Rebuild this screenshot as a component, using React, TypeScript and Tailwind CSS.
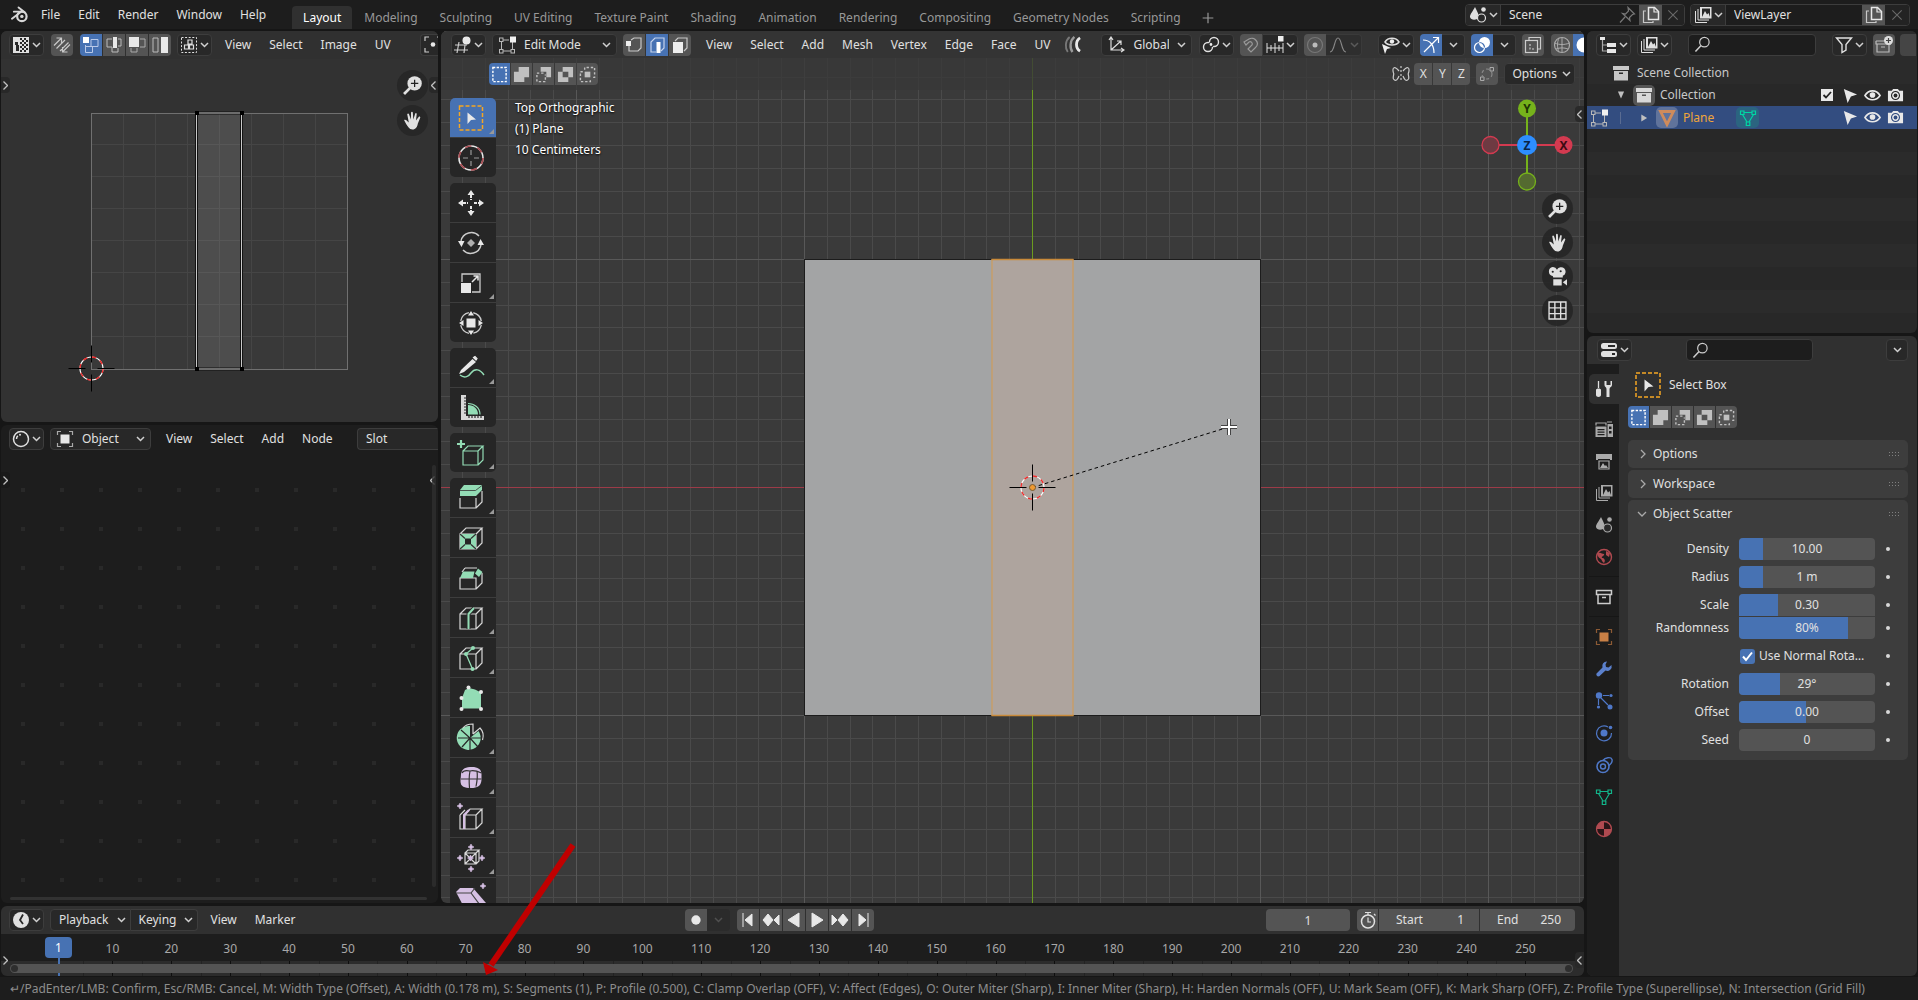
import type { ReactNode } from 'react';

/* ---------- shared pieces ---------- */

type G = { children?: ReactNode; className?: string };

function Ico({ children, className = 'size-[18px]' }: G) {
  return (
    <svg viewBox="0 0 18 18" className={`shrink-0 ${className}`} fill="none" stroke="#e0e0e0" strokeWidth="1.2" aria-hidden="true">
      {children}
    </svg>
  );
}

function Chevron({ className = 'text-[#d0d0d0]' }: G) {
  return (
    <svg viewBox="0 0 9 6" className={`h-[6px] w-[9px] shrink-0 ${className}`} fill="none" stroke="currentColor" strokeWidth="1.5" aria-hidden="true">
      <path d="M1 1l3.500 3.500L8 1" />
    </svg>
  );
}

function Side({ label, dir, className }: { label: string; dir: 'left' | 'right'; className: string }) {
  return (
    <button aria-label={label} className={`flex h-4 w-[9px] shrink-0 items-center justify-center ${className}`}>
      <svg viewBox="0 0 5 9" className="h-[9px] w-[5px]" fill="none" stroke="#c0c0c0" strokeWidth="1.300" aria-hidden="true">
        <path d={dir === 'left' ? 'M4.500 0.500l-4 4 4 4' : 'M0.500 0.500l4 4-4 4'} />
      </svg>
    </button>
  );
}

function IconMenu({ label, children, className = 'w-[35px]' }: G & { label: string }) {
  return (
    <button aria-label={label} className={`flex h-[22px] shrink-0 items-center justify-center gap-[2px] rounded-[4px] border border-[#3d3d3d] bg-[#282828] ${className}`}>
      {children}
      <Chevron />
    </button>
  );
}

function Menus({ items }: { items: string[] }) {
  return (
    <nav className="flex shrink-0">
      {items.map((t) => (
        <button key={t} className="px-[9px] leading-[22px]">
          {t}
        </button>
      ))}
    </nav>
  );
}

function Pick({ label, options, icon, className }: { label: string; options: string[]; icon: ReactNode; className: string }) {
  return (
    <label className={`relative flex h-[22px] shrink-0 items-center gap-2 rounded-[4px] border border-[#3d3d3d] bg-[#282828] px-[5px] ${className}`}>
      {icon}
      <select aria-label={label} className="min-w-0 flex-1 appearance-none bg-transparent leading-5 outline-none">
        {options.map((o) => (
          <option key={o}>{o}</option>
        ))}
      </select>
      <Chevron />
    </label>
  );
}

function Tog({ label, on, children, className = 'w-[22px]' }: G & { label: string; on?: boolean }) {
  return (
    <button aria-label={label} aria-pressed={!!on} className={`flex h-[22px] shrink-0 items-center justify-center ${on ? 'bg-[#4772b3]' : 'bg-[#545454]'} ${className}`}>
      {children}
    </button>
  );
}

function Arm({ label }: { label: string }) {
  return (
    <button aria-label={label} className="flex h-[22px] w-[23px] shrink-0 items-center justify-center rounded-r-[4px] border border-l-0 border-[#3d3d3d] bg-[#282828]">
      <Chevron />
    </button>
  );
}

function SelectOps() {
  return (
    <div className="flex shrink-0 gap-px overflow-hidden rounded-[4px]">
      <Tog label="Set selection" on className="w-[21px]">
        <Ico className="size-[17px]"><rect x="2" y="1.500" width="14" height="15" stroke="#fff" strokeWidth="1.500" strokeDasharray="2.500 1.500" /></Ico>
      </Tog>
      <Tog label="Extend selection" className="w-[21px]">
        <Ico className="size-[17px]"><path d="M6 1h11v11h-5v5H1V6h5z" fill="#c0c0c0" stroke="none" /></Ico>
      </Tog>
      <Tog label="Subtract selection" className="w-[21px]">
        <Ico className="size-[17px]"><path d="M6 1h11v11h-5V6H6z" fill="#c0c0c0" stroke="none" /><path d="M9 7.500H2v9h9V9" stroke="#c0c0c0" strokeWidth="1.500" strokeDasharray="2.500 2" /></Ico>
      </Tog>
      <Tog label="Invert selection" className="w-[21px]">
        <Ico className="size-[17px]"><path d="M6 1h11v11h-5v5H1V6h5zM6 6v6h6V6z" fill="#c0c0c0" fillRule="evenodd" stroke="none" /></Ico>
      </Tog>
      <Tog label="Intersect selection" className="w-[21px]">
        <Ico className="size-[17px]"><rect x="6" y="6" width="6" height="6" fill="#c0c0c0" stroke="none" /><path d="M6 4V1.500h10.500V12H14M4 6H1.500v10.500H12V14" stroke="#c0c0c0" strokeWidth="1.500" strokeDasharray="2.500 2" /></Ico>
      </Tog>
    </div>
  );
}

function Search({ label, className }: { label: string; className: string }) {
  return (
    <label className={`flex h-[22px] shrink-0 items-center rounded-[4px] border border-[#3d3d3d] bg-[#1d1d1d] px-[5px] ${className}`}>
      <Ico className="size-[17px]"><circle cx="11" cy="6.500" r="5" stroke="#ccc" strokeWidth="1.300" /><path d="M7.500 10L1.500 16.500" stroke="#ccc" strokeWidth="1.600" /></Ico>
      <input type="search" aria-label={label} className="w-full min-w-0 bg-transparent outline-none" />
    </label>
  );
}

/* ---------- glyphs ---------- */

const editBox = (
  <Ico>
    <path d="M3.500 6v8M5 15h8M14.500 14V6M5 4h6" stroke="#b8b8b8" strokeWidth="1" />
    <rect x="1.500" y="2" width="3.500" height="3.500" stroke="#b8b8b8" strokeWidth="1" />
    <rect x="1.500" y="13.500" width="3.500" height="3.500" stroke="#b8b8b8" strokeWidth="1" />
    <rect x="13" y="13.500" width="3.500" height="3.500" stroke="#b8b8b8" strokeWidth="1" />
    <rect x="12" y="0.500" width="6" height="6" fill="#f0f0f0" stroke="none" />
  </Ico>
);
const sceneG = (c: string) => (
  <Ico>
    <path d="M6 1c2 4 4 8 4 10-1 3-8 4-9 0 0-3 3-6 5-10z" fill={c} stroke="none" />
    <circle cx="12.500" cy="12" r="4" stroke={c} fill="#282828" />
    <circle cx="14.500" cy="3.500" r="2.300" fill={c} stroke="none" />
  </Ico>
);
const layersG = (c: string) => (
  <Ico>
    <path d="M1.500 5v11.500H13M4 3v11h11" stroke={c} strokeWidth="1" />
    <path d="M6 1h11.500v11.500H6zM8 11h8V2.500H8z" fill={c} fillRule="evenodd" stroke="none" />
    <path d="M8 11l3-6 2 3.500 1.500-1.500L16 11z" fill={c} stroke="none" />
  </Ico>
);
const pagesG = (
  <Ico>
    <path d="M6.500 1.500h6l4 4v8h-10z" stroke="#e8e8e8" strokeWidth="1.500" />
    <path d="M12 1.500V6h4.500" stroke="#e8e8e8" />
    <path d="M4 5H1.500v11.500H11V15" stroke="#c8c8c8" />
  </Ico>
);
const closeG = <Ico className="size-[14px]"><path d="M3 3l12 12M15 3L3 15" stroke="#6a6a6a" strokeWidth="1.400" /></Ico>;
const boxG = (c: string) => (
  <Ico>
    <path d="M1 2h16v4H1z" fill={c} stroke="none" />
    <path d="M2 7h14v9.500H2zM7 8.500v1.500h4V8.500z" fill={c} fillRule="evenodd" stroke="none" />
  </Ico>
);
const cursorG = <Ico className="size-[17px]"><path d="M3 2l14 6-6.500 2L7 17z" fill="#e8e8e8" stroke="none" /></Ico>;
const eyeG = (
  <Ico className="size-[17px]">
    <path d="M1 9c4-6.500 12-6.500 16 0-4 6-12 6-16 0z" stroke="#e8e8e8" strokeWidth="1.700" />
    <circle cx="9" cy="8.500" r="3" fill="#e8e8e8" stroke="none" />
  </Ico>
);
const camG = (hole: string) => (
  <Ico className="size-[17px]">
    <path d="M1 4h4l1.500-2h5L13 4h4v11H1z" fill="#e8e8e8" stroke="none" />
    <circle cx="9" cy="9" r="4.200" stroke={hole} />
    <circle cx="9" cy="9" r="2" fill={hole} stroke="none" />
  </Ico>
);

/* ---------- top bar ---------- */

function TopBar() {
  const tabs = ['Modeling', 'Sculpting', 'UV Editing', 'Texture Paint', 'Shading', 'Animation', 'Rendering', 'Compositing', 'Geometry Nodes', 'Scripting'];
  return (
    <header className="flex h-[29px] shrink-0 items-center bg-[#1d1d1d] pr-2">
      <button aria-label="Blender" className="ml-2.5 mr-[3px] shrink-0">
        <svg viewBox="0 0 20 18" className="h-[17px] w-[19px]" fill="none" stroke="#d8d8d8" aria-hidden="true">
          <circle cx="12.500" cy="11" r="5" strokeWidth="2.300" />
          <circle cx="12.500" cy="11" r="1.800" fill="#d8d8d8" stroke="none" />
          <path d="M2 13.500L11 6.500M4 6h9M9 1.500l6.500 5" strokeWidth="2" strokeLinecap="round" />
        </svg>
      </button>
      <Menus items={['File', 'Edit', 'Render', 'Window', 'Help']} />
      <nav className="ml-[17px] flex shrink-0 self-end text-[#989898]">
        <button className="mr-px rounded-t-[4px] bg-[#303030] px-[11px] leading-[23px] text-white">Layout</button>
        {tabs.map((t) => (
          <button key={t} className="px-[11px] leading-[23px]">{t}</button>
        ))}
        <button aria-label="Add workspace" className="px-2.5">
          <Ico className="size-[12px]"><path d="M9 1v16M1 9h16" stroke="#989898" strokeWidth="1.800" /></Ico>
        </button>
      </nav>
      <div className="ml-auto flex shrink-0 gap-[5px]">
        <div className="flex h-[22px] w-[220px] items-stretch overflow-hidden rounded-[4px] border border-[#3d3d3d]">
          <button aria-label="Browse scene" className="flex w-[35px] items-center justify-center gap-[2px] border-r border-[#3d3d3d] bg-[#282828]">{sceneG('#e0e0e0')}<Chevron /></button>
          <input aria-label="Scene name" defaultValue="Scene" className="min-w-0 flex-1 bg-[#1d1d1d] pl-2 outline-none" />
          <button aria-label="Pin scene" className="flex w-6 items-center justify-center">
            <Ico><path d="M10 1.500l6.500 6.500-2 .5-3 3 .5 3-7.500-7 3 .5 3-3zM7 11l-5 5.500" stroke="#777" /></Ico>
          </button>
          <button aria-label="New scene" className="flex w-[23px] items-center justify-center bg-[#545454]">{pagesG}</button>
          <button aria-label="Delete scene" className="flex w-[22px] items-center justify-center bg-[#232323]">{closeG}</button>
        </div>
        <div className="flex h-[22px] w-[220px] items-stretch overflow-hidden rounded-[4px] border border-[#3d3d3d]">
          <button aria-label="Browse view layer" className="flex w-[35px] items-center justify-center gap-[2px] border-r border-[#3d3d3d] bg-[#282828]">{layersG('#e0e0e0')}<Chevron /></button>
          <input aria-label="View layer name" defaultValue="ViewLayer" className="min-w-0 flex-1 bg-[#1d1d1d] pl-2 outline-none" />
          <button aria-label="New view layer" className="flex w-[23px] items-center justify-center bg-[#545454]">{pagesG}</button>
          <button aria-label="Delete view layer" className="flex w-6 items-center justify-center bg-[#232323]">{closeG}</button>
        </div>
      </div>
    </header>
  );
}

/* ---------- navigation buttons and cursors ---------- */

function Round({ label, children }: G & { label: string }) {
  return (
    <button aria-label={label} className="flex size-[31px] items-center justify-center rounded-full bg-[#262626]/90">
      {children}
    </button>
  );
}
const zoomG = (
  <Ico className="size-[19px]">
    <circle cx="11" cy="7" r="6.800" fill="#e0e0e0" stroke="none" />
    <path d="M7 11l-6 6" stroke="#e0e0e0" strokeWidth="2.600" />
    <path d="M11 3.500v7M7.500 7h7" stroke="#222" strokeWidth="1.200" />
  </Ico>
);
const handG = (
  <Ico className="size-[19px]">
    <path d="M1 8.500c1.500-1 2.500.5 4.500 2.500L4 3c.3-1 1.400-1 1.700 0L7.500 8 7.600 1.500c.3-1 1.500-1 1.700 0L9.800 8l1.700-5.500c.4-.9 1.500-.6 1.500.4L12.300 9l2.700-3.500c.7-.7 1.700 0 1.300 1L14 12c-.5 3-2 5.500-5 5.500S4.500 15 1 8.500z" fill="#e0e0e0" stroke="none" />
  </Ico>
);

function Cursor3D({ x, y }: { x: number; y: number }) {
  return (
    <g transform={`translate(${x} ${y})`} fill="none">
      <circle r="11.500" stroke="#fff" strokeWidth="1.200" />
      <circle r="11.500" stroke="#f02a2a" strokeWidth="1.300" strokeDasharray="4.500 4.500" />
      <path d="M-23 0h17M6 0h17M0-23v17M0 6v17" stroke="#000" />
    </g>
  );
}

/* ---------- UV editor ---------- */

function UvEditor() {
  const cells = [1, 2, 3, 4, 5, 6, 7];
  return (
    <section aria-label="UV Editor" className="relative flex h-[391px] shrink-0 flex-col overflow-hidden rounded-[6px] bg-[#323232]">
      <div className="flex h-7 shrink-0 items-center overflow-hidden bg-[#303030] pl-2">
        <IconMenu label="Editor type: UV">
          <Ico>
            <path d="M1 1h16v16H1z" fill="#e0e0e0" stroke="none" />
            <path d="M3 6h3v3H3zM4 9h3v6H4z" fill="#282828" stroke="none" />
            <path d="M8 2h2v2H8zM12 2h2v2h-2zM10 4h2v2h-2zM14 4h2v2h-2zM8 6h2v2H8zM12 6h2v2h-2zM10 8h2v2h-2zM14 8h2v2h-2zM8 10h2v2H8zM12 10h2v2h-2zM10 12h2v2h-2zM14 12h2v2h-2zM8 14h2v2H8zM12 14h2v2h-2z" fill="#282828" stroke="none" />
          </Ico>
        </IconMenu>
        <Tog label="UV sync selection" className="ml-[7px] w-[22px] rounded-[4px]">
          <Ico><path d="M1 9.500L8.500 2M8.500 7V2h-5M9.500 16L17 8.500M9.500 11v5h5M3.500 12.500L12 4M7 15L15.500 6.500" stroke="#c8c8c8" /></Ico>
        </Tog>
        <div className="ml-[7px] flex shrink-0 gap-px overflow-hidden rounded-[4px]">
          <Tog label="Vertex select" on><Ico><path d="M9 3.500h7v7H9zM3.500 9v7.500h7V10.500H3.500" stroke="#b9c9e8" strokeWidth="1" /><rect x="1" y="1" width="6" height="6" fill="#fff" stroke="none" /></Ico></Tog>
          <Tog label="Edge select"><Ico><path d="M7 3H2v8h5M7 11v5h6v-4M13 3h3v7h-3" stroke="#bbb" strokeWidth="1" /><rect x="8" y="1" width="4" height="11" fill="#e8e8e8" stroke="none" /></Ico></Tog>
          <Tog label="Face select"><Ico><path d="M12 3h5v8h-5M9 12v4H3v-4" stroke="#aaa" strokeWidth="1" /><rect x="1" y="1" width="10" height="10" fill="#e8e8e8" stroke="none" /></Ico></Tog>
          <Tog label="Island select"><Ico><path d="M2 2h5v14H2z" stroke="#bbb" strokeWidth="1" /><rect x="10" y="1" width="7" height="16" fill="#e8e8e8" stroke="none" /></Ico></Tog>
        </div>
        <IconMenu label="Sticky selection" className="ml-[6px] w-[35px]">
          <Ico><rect x="1.500" y="1.500" width="15" height="15" strokeWidth="1" strokeDasharray="2 1.600" /><path d="M8 4h4v4H8zM4.500 9h4v4h-4zM9.500 9h4v4h-4z" /></Ico>
        </IconMenu>
        <div className="ml-1 flex shrink-0"><Menus items={['View', 'Select', 'Image', 'UV']} /></div>
        <button aria-label="Pivot" className="ml-auto flex h-[22px] w-[18px] shrink-0 items-center overflow-hidden rounded-l-[4px] border border-r-0 border-[#3d3d3d] bg-[#282828] pl-[3px]">
          <Ico><path d="M1 5V1h4M1 12v4h4M13 1h4v4" stroke="#ccc" /><circle cx="9" cy="8.500" r="2.300" fill="#e8e8e8" stroke="none" /></Ico>
        </button>
      </div>
      <svg className="absolute left-0 top-7 h-[363px] w-full" aria-label="UV layout">
        <g transform="translate(-1 -59)">
          <rect x="91.500" y="113.500" width="256" height="256" fill="#393939" />
          <g stroke="#454545">
            {cells.map((i) => (
              <path key={i} d={`M${91.5 + i * 32} 113v256M92 ${112.5 + i * 32}h256`} />
            ))}
          </g>
          <rect x="91.500" y="113.500" width="256" height="256" fill="none" stroke="#707070" />
          <rect x="196.500" y="113" width="45" height="256" fill="#fff" fillOpacity="0.100" stroke="#111" strokeWidth="3" />
          <rect x="196.500" y="113" width="45" height="256" fill="none" stroke="#c8c8c8" />
          <path d="M195 111h4v4h-4zM240 111h4v4h-4zM195 367h4v4h-4zM240 367h4v4h-4z" fill="#000" />
          <Cursor3D x={91.5} y={368.5} />
        </g>
      </svg>
      <div className="relative flex flex-1 justify-between">
        <Side label="Show toolbar" dir="right" className="mt-[18px] rounded-r bg-[#282828]" />
        <div className="flex">
          <div className="mt-[11px] flex flex-col gap-[4px]">
            <Round label="Zoom view">{zoomG}</Round>
            <Round label="Move view">{handG}</Round>
          </div>
          <Side label="Show sidebar" dir="left" className="ml-px mt-[18px] rounded-l bg-[#282828]" />
        </div>
      </div>
    </section>
  );
}

/* ---------- shader editor ---------- */

function ShaderEditor() {
  return (
    <section aria-label="Shader Editor" className="relative flex min-h-0 flex-1 flex-col overflow-hidden rounded-[6px] bg-[#1d1d1d]">
      <svg className="absolute inset-0 size-full" aria-hidden="true">
        <defs>
          <pattern id="dots" x="20" y="63" width="39" height="39" patternUnits="userSpaceOnUse">
            <rect width="4" height="4" fill="#292929" />
          </pattern>
        </defs>
        <rect y="60" width="100%" height="410" fill="url(#dots)" />
      </svg>
      <div className="relative flex h-7 shrink-0 items-center overflow-hidden pl-2">
        <IconMenu label="Editor type: Shader">
          <Ico><circle cx="9" cy="9" r="7.500" strokeWidth="1.500" /><path d="M4.500 9a4.500 4.500 0 0 1 1.300-3.200" strokeWidth="1.500" /><circle cx="8" cy="4.800" r="1" fill="#e0e0e0" stroke="none" /></Ico>
        </IconMenu>
        <Pick label="Shader type" options={['Object', 'World']} className="ml-[6px] w-[101px]"
          icon={<Ico><path d="M1.500 5V1.500H5M13 1.500h3.500V5M16.500 13v3.500H13M5 16.500H1.500V13" stroke="#aaa" /><rect x="4.500" y="4.500" width="9" height="9" fill="#e8e8e8" stroke="none" /></Ico>} />
        <div className="ml-[6px] flex shrink-0"><Menus items={['View', 'Select', 'Add', 'Node']} /></div>
        <button className="ml-auto h-[22px] w-[81px] shrink-0 rounded-l-[4px] border border-r-0 border-[#3d3d3d] bg-[#282828] pl-2 text-left">Slot</button>
      </div>
      <div className="relative mt-3 flex min-h-0 flex-1 justify-between pb-[10px]">
        <Side label="Show toolbar" dir="right" className="mt-[7px] rounded-r bg-[#191919]" />
        <div className="flex">
          <Side label="Show sidebar" dir="left" className="mt-[7px]" />
          <div className="-ml-[5px] mr-[2px] w-[4px] rounded-full bg-[#303030]/80" />
        </div>
      </div>
      <div className="relative mb-[3px] ml-[9px] mr-[11px] h-[3px] shrink-0 rounded-full bg-[#323232]" />
    </section>
  );
}

/* ---------- 3D viewport ---------- */

const W = '#d8d8d8';
const M = '#93dcb5';
const P = '#d6c0e4';
const cube = (c = W) => <path d="M2 9h16v15H2zM2 9l6-6h16l-6 6M24 3v15l-6 6" stroke={c} />;
const cross = (x: number, y: number, c: string) => <path d={`M${x} ${y - 3}l1 2 2 1-2 1-1 2-1-2-2-1 2-1z`} fill={c} stroke={c} strokeWidth="0.600" />;

type Tool = { label: string; on?: boolean; more?: boolean; art: ReactNode };
const toolGroups: Tool[][] = [
  [
    { label: 'Select Box', on: true, more: true, art: <><rect x="1.500" y="1" width="23" height="24" stroke="#f5a623" strokeWidth="1.500" strokeDasharray="4 2" /><path d="M9.500 7.500l8.500 7-5 .5-3.500 4z" fill="#e8e8e8" stroke="none" /></> },
    { label: 'Cursor', art: <><circle cx="13" cy="13" r="12" stroke="#e8e8e8" strokeWidth="1.600" /><circle cx="13" cy="13" r="12" stroke="#a84a50" strokeWidth="1.700" strokeDasharray="6.280 6.280" /><path d="M13 5v5M13 16v5M5 13h5M16 13h5" stroke="#999" /></> },
  ],
  [
    { label: 'Move', art: <><path d="M13 0l3.500 5h-7zM13 26l3.500-5h-7zM0 13l5-3.500v7zM26 13l-5-3.500v7z" fill="#e8e8e8" stroke="none" /><path d="M13 5v5M13 16v5M5 13h5M16 13h5" stroke="#e8e8e8" strokeWidth="2" strokeDasharray="3 1" /></> },
    { label: 'Rotate', art: <><path d="M3 11a10.500 10.500 0 0 1 18-5M23 15a10.500 10.500 0 0 1-18 5" stroke="#ccc" strokeWidth="1.400" /><path d="M0 11h6.500L3.500 17zM26 15h-6.500l3-6z" fill="#e8e8e8" stroke="none" /><path d="M13 9l4 4-4 4-4-4z" fill="#b0b0b0" stroke="none" /></> },
    { label: 'Scale', more: true, art: <><path d="M4 12V4h18v18h-8" stroke="#ccc" strokeWidth="1.300" /><rect x="3" y="13" width="10" height="10" fill="#e8e8e8" stroke="none" /><path d="M14 12l6-6M15.500 6H20v4.500" stroke="#e8e8e8" strokeWidth="1.500" /></> },
    { label: 'Transform', art: <><circle cx="13" cy="13" r="10.500" stroke="#ccc" strokeWidth="1.300" strokeDasharray="12 4.500" strokeDashoffset="-2" /><rect x="8.500" y="8.500" width="9" height="9" fill="#e8e8e8" stroke="none" /><path d="M13 1l3 4.500h-6zM13 25l3-4.500h-6zM1 13l4.500-3v6zM25 13l-4.500-3v6z" fill="#e8e8e8" stroke="none" /></> },
  ],
  [
    { label: 'Annotate', more: true, art: <><path d="M3 15L14.500 4l3.500 3L6 17l-5 2z" fill="#e8e8e8" stroke="none" /><path d="M15.500 2.500l1.500-1 2 2-1 1.500z" fill="#e8e8e8" stroke="#e8e8e8" /><path d="M2 20c5 4 9 1 11-2 4-5 9-4 13 2" stroke={M} strokeWidth="1.500" /></> },
    { label: 'Measure', art: <><path d="M3 0h5v21h18v4H3z" fill="#d8d8d8" stroke="none" /><path d="M6 3h3M6 6h3M6 9h3M6 12h3M6 15h3M6 18h3M11 21v2M14 21v2M17 21v2M20 21v2M23 21v2" stroke="#282828" /><path d="M10 19.500V10c6 0 10 4 10 9.500z" fill={M} stroke="none" /><path d="M10 8.500c6.500 0 12 4.500 12 11" stroke={M} /></> },
  ],
  [{ label: 'Add Cube', more: true, art: <><path d="M5 11h15v14H5zM5 11l5-5h15l-5 5M25 6v14l-5 5" stroke={M} strokeWidth="1.200" /><path d="M3 0v8M-1 4h8" stroke={M} strokeWidth="2.200" /></> }],
  [
    { label: 'Extrude Region', more: true, art: <><path d="M2 5l4-5h18v5l-6 6H2z" fill={M} stroke="none" /><path d="M2 5.500h15.500L24 0.500" stroke="#333" strokeWidth="0.800" /><path d="M2 13v10h16V13M24 6v11l-6 6" stroke={W} /></> },
    { label: 'Inset Faces', art: <>{cube()}<path d="M2 9h16v15H2zM7 13.500v6h6v-6z" fill={M} fillRule="evenodd" stroke="none" /><path d="M2 9l5 4.500M18 9l-5 4.500M2 24l5-4.500M18 24l-5-4.500" stroke="#333" /></> },
    { label: 'Bevel', art: <><path d="M2 13h16v11H2zM7 3h12M24 8v10l-6 6M7 3L4 7" stroke={W} /><path d="M5 6.500h11.500L15 13H2zM20 3.500l4.500 3.500-3.500 5-4-3.500z" fill={M} stroke="none" /></> },
    { label: 'Loop Cut', more: true, art: <>{cube()}<path d="M10.500 24V9L16 3" stroke="#282828" strokeWidth="4" /><path d="M10.500 24V9L16 3" stroke={M} strokeWidth="2" /></> },
    { label: 'Knife', more: true, art: <>{cube()}<path d="M15 3L8 9l6.500 15" stroke={M} strokeWidth="1.300" /><g fill={M} stroke="none"><circle cx="15" cy="3" r="2" /><circle cx="8" cy="9" r="2" /><circle cx="14.500" cy="24" r="2" /></g></> },
    { label: 'Poly Build', art: <><path d="M4 23.500V13l3-8 4-2 6 1.500 6 3V23.500z" fill={M} stroke="none" /><g fill="#e8e8e8" stroke="none"><circle cx="10.500" cy="2.500" r="2" /><circle cx="23" cy="7" r="2" /><circle cx="3.500" cy="13" r="2" /><circle cx="3.500" cy="24" r="2" /><circle cx="23" cy="24" r="2" /></g></> },
    { label: 'Spin', more: true, art: <><path d="M12 13V1A12 12 0 1 0 20.500 6z" fill={M} stroke="none" /><path d="M12 13L3 5M12 13H0M12 13L4 22M12 13v12M12 13l8 9M12 13h12" stroke="#282828" /><path d="M5 3c2-3 6-4 10-4v10M15 9l7-6c3 3 4 7 2.500 12" stroke={W} /></> },
    { label: 'Smooth', more: true, art: <><path d="M3 9c1-6 5-7 11-7s9 2 9.500 7v6c-.5 6-4 8-10.500 8S2.500 22 2.500 16z" fill={P} stroke="none" /><path d="M3 14h20.500M12 6c-1 5-1 11-.5 17M12 6c4-1 7 0 11.500 2M12 6C8 5 5 6 4 8M19 6.500c1 5 0 10-1 15" stroke="#333" /></> },
    { label: 'Edge Slide', more: true, art: <><path d="M2 10v14h16V10H7v14M2 10l5-5M18 10l6-6H12L7 10M24 4v14l-6 6" stroke={W} /><path d="M6 24V10l5-5" stroke={P} strokeWidth="2" />{cross(2, 1, P)}</> },
    { label: 'Shrink/Fatten', more: true, art: <><path d="M7 8h11v11H7zM7 8l3-3h11l-3 3M21 5v11l-3 3M7 8l11 11M18 8L7 19" stroke={W} />{cross(13, 2, P)}{cross(13, 24, P)}{cross(2, 13, P)}{cross(24, 13, P)}{cross(12.500, 13, P)}</> },
    { label: 'Shear', art: <><path d="M-2 7l4-4h13l13 15v8H8z" fill={P} stroke="none" /><path d="M-2 8h15L25 24M13 8l4-5" stroke="#444" />{cross(25, 1, P)}</> },
  ],
];

function ToolShelf() {
  return (
    <div className="flex w-[46px] flex-col gap-[6px]">
      {toolGroups.map((g) => (
        <div key={g[0].label} className="flex flex-col gap-px overflow-hidden rounded-[5px] bg-[#3d3d3d]">
          {g.map((t) => (
            <button key={t.label} aria-label={t.label} className={`relative flex h-[39px] shrink-0 items-center justify-center pr-1 ${t.on ? 'bg-[#4772b3]' : 'bg-[#262626]'}`}>
              <svg viewBox="0 0 26 26" className="size-[26px] overflow-visible" fill="none" strokeWidth="1.200" aria-hidden="true">{t.art}</svg>
              {t.more && <svg viewBox="0 0 5 5" className="absolute bottom-[3px] right-[2px] size-[5px]" aria-hidden="true"><path d="M5 0v5H0z" fill="#999" /></svg>}
            </button>
          ))}
        </div>
      ))}
    </div>
  );
}

function Scene3D() {
  const cx = 591.5;
  const cy = 456.5;
  const n = Array.from({ length: 61 }, (_, i) => i - 30);
  return (
    <svg className="absolute inset-0 size-full" aria-label="Viewport canvas">
      {n.map((i) => (
        <g key={i} stroke="#4a4a4a" shapeRendering="crispEdges">
          <path d={`M${cx + i * 22.8} 0V2000`} />
          <path d={`M0 ${cy + i * 22.8}H3000`} />
        </g>
      ))}
      {n.filter((i) => i % 10 === 0).map((i) => (
        <g key={i} stroke="#585858">
          <path d={`M${cx + i * 22.8} 0V2000`} />
          <path d={`M0 ${cy + i * 22.8}H3000`} />
        </g>
      ))}
      <path d={`M0 ${cy}H3000`} stroke="#9c3b48" />
      <path d={`M${cx} 0V2000`} stroke="#6b9b1f" />
      <rect x={cx - 228} y={cy - 228} width="456" height="456" fill="#a3a4a5" stroke="#1c1c1c" />
      <rect x={cx - 40.500} y={cy - 228} width="81" height="456" fill="#aea49e" stroke="#d6994f" />
      <path d={`M${cx - 41} ${cy - 228}h82M${cx - 41} ${cy + 228}h82`} stroke="#c98a3a" strokeWidth="1.500" />
      <Cursor3D x={cx} y={cy} />
      <path d={`M${cx} ${cy}L788 396`} stroke="#000" strokeDasharray="3.500 3" />
      <circle cx={cx} cy={cy} r="3" fill="#f09a30" stroke="#7a5a30" />
      <path d="M788 388v16M780 396h16" stroke="#444" strokeWidth="4" />
      <path d="M788 388v16M780 396h16" stroke="#fff" strokeWidth="2" />
    </svg>
  );
}

function AxisGizmo() {
  return (
    <svg viewBox="0 0 96 96" className="size-[96px]" fontFamily="Noto Sans, sans-serif" fontSize="12" fontWeight="700" textAnchor="middle" aria-label="View axes">
      <path d="M12 48h72" stroke="#d33a50" strokeWidth="2" />
      <path d="M48 12v72" stroke="#76b21b" strokeWidth="2" />
      <circle cx="11.500" cy="48" r="8.500" fill="#6e3a42" stroke="#d33a50" strokeWidth="1.300" />
      <circle cx="48" cy="84.500" r="8.500" fill="#546a30" stroke="#76b21b" strokeWidth="1.300" />
      <circle cx="48" cy="11.500" r="9" fill="#76b21b" />
      <circle cx="84.500" cy="48" r="9" fill="#d33a50" />
      <circle cx="48" cy="48" r="10" fill="#2d8eff" />
      <text x="48" y="16" fill="#1f3404">Y</text>
      <text x="84.500" y="52.500" fill="#3c0a12">X</text>
      <text x="48" y="52.500" fill="#0a2547">Z</text>
    </svg>
  );
}

function Viewport() {
  return (
    <section aria-label="3D Viewport" className="relative flex min-w-0 flex-1 flex-col overflow-hidden rounded-[6px] bg-[#3a3a3a]">
      <Scene3D />
      <div className="relative flex h-[27px] shrink-0 items-center overflow-hidden bg-[#343434] pl-[10px]">
        <IconMenu label="Editor type: 3D Viewport">
          <Ico><path d="M1 9h12M0 14h14M5 6L3 17M11 9l-1 8" stroke="#ccc" /><circle cx="12.500" cy="4.500" r="4" fill="#e8e8e8" stroke="none" /></Ico>
        </IconMenu>
        <Pick label="Mode" options={['Edit Mode', 'Object Mode']} icon={editBox} className="ml-[6px] w-[125px]" />
        <div className="ml-[6px] flex shrink-0 gap-px overflow-hidden rounded-[4px]">
          <Tog label="Vertex"><Ico><path d="M6 4l3-2h7v10l-3 3H4v-5" stroke="#c8c8c8" /><rect x="1" y="5" width="5" height="5" fill="#eee" stroke="none" /></Ico></Tog>
          <Tog label="Edge" on><Ico><path d="M8 16H3V6l4-4h9v10l-3 3" stroke="#c4d2ec" /><rect x="8.500" y="6" width="4" height="11" fill="#fff" stroke="none" /></Ico></Tog>
          <Tog label="Face"><Ico><path d="M4 5l3-3h9v10l-3 3" stroke="#c8c8c8" /><rect x="2" y="6" width="10" height="11" fill="#eee" stroke="none" /></Ico></Tog>
        </div>
        <div className="ml-[6px] flex shrink-0"><Menus items={['View', 'Select', 'Add', 'Mesh', 'Vertex', 'Edge', 'Face', 'UV']} /></div>
        <Ico className="ml-[5px] size-[17px]">
          <path d="M6 1C1 5 1 13 4 17" stroke="#777" strokeWidth="2" /><path d="M11 1C6 5 6 13 9 17" stroke="#999" strokeWidth="2.500" /><path d="M17 2c-5 3-5 11 0 14" stroke="#e8e8e8" strokeWidth="3" />
        </Ico>
        <Pick label="Transform orientation" options={['Global', 'Local']} className="ml-[20px] w-[91px]"
          icon={<Ico><path d="M4 1v13h13M4 14L14 5M2 4l2-3 2 3M14 12l3 2-3 2M10 5h4v4" stroke="#ddd" /></Ico>} />
        <IconMenu label="Pivot point" className="ml-[7px] w-[35px]">
          <Ico><circle cx="6" cy="11" r="4.500" strokeWidth="1.400" /><circle cx="12" cy="6" r="4.500" strokeWidth="1.400" /><circle cx="9" cy="8.500" r="2" fill="#eee" stroke="#282828" /></Ico>
        </IconMenu>
        <Tog label="Snap" className="ml-[6px] w-[22px] rounded-l-[4px]"><Ico><path d="M2 6l5-3c5-3 12 4 6 9l-4 4-3-3 4-4c1-2-1-4-3-3L4 9z" stroke="#999" /></Ico></Tog>
        <IconMenu label="Snap to" className="w-[36px] rounded-l-none"><Ico><path d="M1 7v10M5 9v6M9 7v10M13 9v6M17 7v10M1 12h16" strokeWidth="1" /><rect x="12" y="0" width="5.500" height="5.500" fill="#eee" stroke="none" /></Ico></IconMenu>
        <Tog label="Proportional editing" className="ml-[6px] w-[22px] rounded-l-[4px]"><Ico><circle cx="9" cy="9" r="7.500" stroke="#777" /><circle cx="9" cy="9" r="2.500" fill="#bbb" stroke="none" /></Ico></Tog>
        <button aria-label="Falloff" className="flex h-[22px] w-[36px] shrink-0 items-center justify-center gap-[3px] rounded-r-[4px] border border-l-0 border-[#3a3a3a] bg-[#2e2e2e]">
          <Ico><path d="M1 16c5 0 4-14 8-14s3 14 8 14" stroke="#888" /></Ico><Chevron className="text-[#5a5a5a]" />
        </button>
        <IconMenu label="Visibility" className="ml-[16px] w-[36px]"><Ico><path d="M3 6c3-5 11-5 14 0-3 4-11 4-14 0z" strokeWidth="1.500" /><circle cx="10" cy="5.500" r="2.200" fill="#eee" stroke="none" /><path d="M0 8l9 4-4 1-2 5z" fill="#eee" stroke="none" /></Ico></IconMenu>
        <Tog label="Gizmos" on className="ml-[6px] w-[22px] rounded-l-[4px]"><Ico><path d="M1 4c7 0 11 5 11 13M2 16L16 2M11 1.500h5.500V7" stroke="#fff" /></Ico></Tog>
        <Arm label="Gizmo options" />
        <Tog label="Overlays" on className="ml-[6px] w-[22px] rounded-l-[4px]"><Ico><circle cx="11.500" cy="6.500" r="5.500" fill="#fff" stroke="none" /><circle cx="6.500" cy="11.500" r="5" stroke="#fff" /><path d="M6.500 6.500a5 5 0 0 1 5 5" stroke="#4772b3" /></Ico></Tog>
        <Arm label="Overlay options" />
        <Tog label="X-ray" className="ml-[6px] w-[22px] rounded-[4px]"><Ico><path d="M5 4V1.500h11.500V13H14" stroke="#ccc" /><rect x="1.500" y="4.500" width="12" height="12" stroke="#ccc" /><path d="M6 8v5h5" strokeDasharray="2 1.500" stroke="#ccc" /></Ico></Tog>
        <Tog label="Wireframe" className="ml-[7px] w-[22px] rounded-l-[4px]"><Ico><circle cx="9" cy="9" r="7.500" stroke="#aaa" /><path d="M9 1.500v15M1.500 7c5 2 10 2 15 0M3 13c4-1.500 8-1.500 12 0M6 2c-2 4-2 10 0 14" stroke="#aaa" strokeWidth="1" /></Ico></Tog>
        <Tog label="Solid" on><Ico><circle cx="9" cy="9" r="7.500" fill="#fff" stroke="none" /></Ico></Tog>
      </div>
      <div className="relative flex h-8 shrink-0 items-center bg-[#383838]/80 pl-[48px] pr-[9px]">
        <SelectOps />
        <div className="ml-auto flex items-center">
          <Ico><path d="M7 6C2 0 0 3 1.500 8c1 1-1 4 0 6 2 3 4 1 5.500-3M11 6c5-6 7-3 5.500 2-1 1 1 4 0 6-2 3-4 1-5.500-3" stroke="#ccc" /><path d="M9 1v16" stroke="#ccc" strokeDasharray="2 2" /></Ico>
          <div className="ml-1 flex gap-px overflow-hidden rounded-[4px]">
            {['X', 'Y', 'Z'].map((a) => (
              <button key={a} aria-pressed={false} className="h-[22px] w-[18px] bg-[#545454]">{a}</button>
            ))}
          </div>
          <Tog label="Auto merge" className="ml-[6px] w-[22px] rounded-[4px]"><Ico><path d="M12 2.500h3.500V6H12zM2.500 12H6v3.500H2.500z" stroke="#aaa" strokeWidth="1" /><circle cx="9" cy="9" r="5" stroke="#888" strokeDasharray="3 2.500" /></Ico></Tog>
          <button className="ml-[6px] flex h-[22px] items-center gap-[5px] rounded-[4px] border border-[#3d3d3d] bg-[#282828] pl-[7px] pr-[3px]">Options<Chevron /></button>
        </div>
      </div>
      <div className="relative flex min-h-0 flex-1 items-start justify-between overflow-hidden">
        <div className="flex gap-[19px] pl-[9px] pt-2">
          <ToolShelf />
          <div className="-mt-px leading-[21px] text-white [text-shadow:0_1px_2px_#000]">
            <p>Top Orthographic</p>
            <p>(1) Plane</p>
            <p>10 Centimeters</p>
          </div>
        </div>
        <div className="relative flex pt-[7px]">
          <div className="mr-[9px] flex flex-col items-end">
            <AxisGizmo />
            <div className="mr-[2px] flex flex-col gap-[3px]">
              <Round label="Zoom view">{zoomG}</Round>
              <Round label="Move view">{handG}</Round>
              <Round label="Camera view">
                <Ico className="size-[19px]"><path d="M4.500 0a4.300 4.300 0 0 0 0 8.500L5 10h9V8.400A4.300 4.300 0 1 0 8.500 2.500 4.300 4.300 0 0 0 4.500 0zM3.500 4.500a1 1 0 1 0 2 0 1 1 0 1 0-2 0zM11 4a1 1 0 1 0 2 0 1 1 0 1 0-2 0zM5 11.500h8v6H5zM14 14.500l4-3v6z" fill="#e0e0e0" fillRule="evenodd" stroke="none" /></Ico>
              </Round>
              <Round label="Toggle perspective">
                <Ico className="size-[19px]"><path d="M1 1h16v16H1zM6.500 1v16M12 1v16M1 6.500h16M1 12h16" stroke="#e0e0e0" strokeWidth="1.300" /></Ico>
              </Round>
            </div>
          </div>
          <Side label="Show sidebar" dir="left" className="absolute right-0 top-[16px] rounded-l bg-[#2a2a2a]" />
        </div>
      </div>
    </section>
  );
}

/* ---------- timeline ---------- */

function Timeline() {
  const frames = Array.from({ length: 25 }, (_, i) => (i + 1) * 10);
  const play = [
    ['Jump to start', 'M4 2v14M6 9l7-6v12z'],
    ['Previous keyframe', 'M6 3l5 6-5 6-5-6zM17 4v10l-5-5z'],
    ['Play reverse', 'M14 2v14L3 9z'],
    ['Play', 'M4 2v14l11-7z'],
    ['Next keyframe', 'M12 3l5 6-5 6-5-6zM1 4v10l5-5z'],
    ['Jump to end', 'M14 2v14M5 3v12l7-6z'],
  ];
  return (
    <section aria-label="Timeline" className="relative flex h-[70px] shrink-0 flex-col overflow-hidden rounded-[6px] bg-[#1d1d1d]">
      <div className="flex h-7 shrink-0 items-center bg-[#303030] pl-2 pr-[9px]">
        <div className="flex flex-[677] items-center">
          <IconMenu label="Editor type: Timeline"><Ico><circle cx="9" cy="9" r="8" fill="#e0e0e0" stroke="none" /><path d="M11 3.500L8 9l3 4" stroke="#282828" strokeWidth="1.800" /></Ico></IconMenu>
          <button className="ml-[6px] flex h-[22px] items-center gap-[8px] rounded-l-[4px] border border-[#3d3d3d] bg-[#282828] pl-2 pr-1">Playback<Chevron /></button>
          <button className="flex h-[22px] items-center gap-[8px] rounded-r-[4px] border border-l-0 border-[#3d3d3d] bg-[#282828] pl-2 pr-1">Keying<Chevron /></button>
          <div className="ml-[3px] flex"><Menus items={['View', 'Marker']} /></div>
        </div>
        <div className="flex shrink-0">
          <Tog label="Auto keying" className="w-[22px] rounded-l-[4px]"><Ico className="size-[12px]"><circle cx="9" cy="9" r="7" fill="#e8e8e8" stroke="none" /></Ico></Tog>
          <button aria-label="Auto keying options" className="flex w-[23px] items-center justify-center rounded-r-[4px] bg-[#2b2b2b]"><Chevron className="text-[#505050]" /></button>
          <div className="ml-[7px] flex gap-px overflow-hidden rounded-[4px]">
            {play.map(([l, d]) => (
              <Tog key={l} label={l}><Ico><path d={d} fill="#e8e8e8" stroke="#e8e8e8" strokeWidth="1" /></Ico></Tog>
            ))}
          </div>
        </div>
        <div className="flex flex-[702] items-center justify-end">
          <input aria-label="Current frame" defaultValue="1" className="h-[22px] w-[84px] rounded-[4px] bg-[#545454] text-center outline-none" />
          <Tog label="Use preview range" className="ml-[7px] w-[21px] rounded-l-[4px]"><Ico><circle cx="9" cy="10.500" r="6.500" strokeWidth="1.500" /><path d="M9 6.500V11h3M6 1.500h6M9 1.500V4M15 3l1.500 1.500" /></Ico></Tog>
          <label className="ml-px flex h-[22px] w-[100px] items-center bg-[#545454] pl-[17px] pr-[15px]">Start<input defaultValue="1" className="w-full min-w-0 bg-transparent text-right outline-none" /></label>
          <label className="ml-px flex h-[22px] w-[95px] items-center rounded-r-[4px] bg-[#545454] pl-[17px] pr-[14px]">End<input defaultValue="250" className="w-full min-w-0 bg-transparent text-right outline-none" /></label>
        </div>
      </div>
      <div className="flex h-[27px] shrink-0 items-center pl-[82px] pr-[29px] pt-[2px] text-[#a8a8a8]">
        {frames.map((f) => (
          <span key={f} className="flex-1 text-center">{f}</span>
        ))}
      </div>
      <div className="flex h-[15px] bg-[#2c2c2c] pl-[82px] pr-[29px]">
        {frames.map((f) => (
          <span key={f} className="flex flex-1 justify-center border-l border-[#222]"><i className="h-full w-px bg-[#0e0e0e]" /></span>
        ))}
      </div>
      <div className="absolute bottom-0 left-[57px] h-5 w-[2px] bg-[#4772b3]" />
      <div className="absolute left-[44px] top-[31px] h-[21px] w-[27px] rounded-[4px] bg-[#4772b3] text-center leading-[21px] text-white">1</div>
      <div className="absolute bottom-[3px] left-[9px] right-[11px] flex h-[9px] items-center justify-between rounded-full bg-[#545454] px-px">
        <span className="size-[7px] rounded-full bg-[#2e2e2e]" />
        <span className="size-[7px] rounded-full bg-[#2e2e2e]" />
      </div>
      <Side label="Show channels" dir="right" className="absolute bottom-2 left-0" />
      <Side label="Show settings" dir="left" className="absolute bottom-2 right-0 rounded-l bg-[#282828]" />
    </section>
  );
}

/* ---------- outliner ---------- */

function Outliner() {
  return (
    <section aria-label="Outliner" className="flex h-[302px] shrink-0 flex-col overflow-hidden rounded-[6px] bg-[#282828]">
      <div className="flex h-[30px] shrink-0 items-center overflow-hidden bg-[#2b2b2b] pb-[3px] pl-[9px]">
        <IconMenu label="Editor type: Outliner"><Ico><path d="M1 1h5v3H1zM8 7h9v4H8zM8 13h9v4H8z" fill="#e8e8e8" stroke="none" /><path d="M3.500 4v11H8M3.500 9H8" stroke="#aaa" /></Ico></IconMenu>
        <IconMenu label="Display mode" className="ml-[6px] w-[35px]">{layersG('#e0e0e0')}</IconMenu>
        <Search label="Filter outliner" className="ml-[16px] w-[128px]" />
        <IconMenu label="Filter" className="ml-[16px] w-[35px]"><Ico><path d="M1.500 2h15L11 8.500V14l-4 2.500v-8z" strokeWidth="1.400" /></Ico></IconMenu>
        <Tog label="New collection" className="ml-[6px] w-[22px] rounded-[4px]"><Ico><path d="M1 5h8M1 5v3h14V9M2 8v8h12V9M6 11h4" stroke="#bbb" /><circle cx="13.500" cy="4.500" r="4.500" fill="#ddd" stroke="none" /><path d="M13.500 2v5M11 4.500h5" stroke="#444" /></Ico></Tog>
        <button aria-label="More filters" className="ml-[5px] h-[22px] w-4 shrink-0 rounded-l-[4px] bg-[#454545]" />
      </div>
      <div className="flex h-[23px] shrink-0 items-center bg-[#2b2b2b] pl-[25px]">
        {boxG('#c8c8c8')}
        <span className="ml-[7px] text-[#c8c8c8]">Scene Collection</span>
      </div>
      <div className="flex h-[22px] shrink-0 items-center pl-[30px] pr-[13px] text-[#c8c8c8]">
        <Ico className="size-[8px]"><path d="M2 1h14L9 17z" fill="#c0c0c0" stroke="none" /></Ico>
        <span className="ml-[8px] flex h-[21px] w-[22px] items-center justify-center rounded-[5px] bg-[#555]">{boxG('#d8d8d8')}</span>
        <span className="ml-[5px]">Collection</span>
        <div className="ml-auto flex items-center gap-[6px]">
          <label className="relative size-[12px]">
            <input type="checkbox" defaultChecked aria-label="Enable collection" className="block size-3 appearance-none bg-[#e8e8e8]" />
            <svg viewBox="0 0 12 12" className="pointer-events-none absolute inset-0" fill="none" stroke="#222" strokeWidth="1.800"><path d="M2.500 6L5 8.500 10 3" /></svg>
          </label>
          <button aria-label="Collection selectable" className="pl-[2px]">{cursorG}</button>
          <button aria-label="Collection visible">{eyeG}</button>
          <button aria-label="Collection in renders">{camG('#282828')}</button>
        </div>
      </div>
      <div className="flex h-[23px] shrink-0 items-center bg-[#334d80] pl-[3px] pr-[13px]">
        {editBox}
        <span className="ml-[12px] h-3 w-px bg-[#5a6c92]" />
        <Ico className="ml-[19px] size-[8px]"><path d="M3 1v16l13-8z" fill="#c0c0c0" stroke="none" /></Ico>
        <span className="ml-[8px] flex h-[21px] w-[22px] items-center justify-center rounded-[5px] bg-[#60739b]">
          <Ico><path d="M2.500 2.500h13L9 15.500z" stroke="#cf8b5c" strokeWidth="2.800" /></Ico>
        </span>
        <span className="ml-[5px] text-[#f0a63a]">Plane</span>
        <span className="ml-[22px] flex h-[21px] w-[23px] items-center justify-center rounded-[5px] bg-[#2b6480]">
          <Ico><path d="M5 3.500h8M3.500 5.500L8 13M14.500 5.500L10 13" stroke="#00d6a3" /><path d="M1.500 2h3.500v3.500H1.500zM13 2h3.500v3.500H13zM7.300 13h3.500v3.500H7.300z" stroke="#00d6a3" /></Ico>
        </span>
        <div className="ml-auto flex items-center gap-[6px]">
          <button aria-label="Plane selectable">{cursorG}</button>
          <button aria-label="Plane visible">{eyeG}</button>
          <button aria-label="Plane in renders">{camG('#334d80')}</button>
        </div>
      </div>
      {[0, 1, 2, 3].map((i) => (
        <div key={i} className="mt-[23px] h-[23px] shrink-0 bg-[#2b2b2b]" />
      ))}
    </section>
  );
}

/* ---------- properties ---------- */

const tabArt: [string, ReactNode, boolean?][] = [
  ['Render', <><path d="M0.500 6.500h11V17h-11zM2.500 9v1.200h7V9zM2.500 11.500v1.200h7v-1.200zM2.500 14v1.200h7V14z" fill="#aaa" fillRule="evenodd" stroke="none" /><path d="M1 5.500V3h10v2.500M12 2h5" stroke="#aaa" /><path d="M12.500 4H18v13h-5.500zM14 6.500v2.500h2.500V6.500zM14 11v2.500h2.500V11z" fill="#aaa" fillRule="evenodd" stroke="none" /></>],
  ['Output', <><path d="M1 2h16v6h-2V7H3v1H1z" fill="#aaa" stroke="none" /><path d="M4 9h10v8H4z" stroke="#aaa" /><path d="M5 16l3-5 2 3 1-1 2 3z" fill="#aaa" stroke="none" /></>],
  ['View Layer', layersG('#aaa')],
  ['Scene', sceneG('#aaa')],
  ['World', <><circle cx="9" cy="9" r="7.500" stroke="#b04a50" strokeWidth="1.400" /><path d="M3 5c3-1 4 1 6 1 1 2-3 2-2 4 2 0 4 2 2 5-2-1-2-3-3-4C4 10 2 8 3 5zM11 3l4 2-1 4-3-2z" fill="#b04a50" stroke="none" /></>, true],
  ['Collection', <path d="M1.500 2.500h15v4h-15zM3 6.500v9h12v-9M7 9.500h4" stroke="#ccc" strokeWidth="1.500" />, true],
  ['Object', <><rect x="4.500" y="4.500" width="9" height="9" fill="#c88046" stroke="none" /><path d="M1.500 5V1.500H5M13 1.500h3.500V5M16.500 13v3.500H13M5 16.500H1.500V13" stroke="#8c5a34" /></>],
  ['Modifiers', <path d="M12 1.500a4.500 4.500 0 0 0-4.500 6L1.500 13.500c-.8 1.800 1 3.500 2.800 2.800L10.500 10.500a4.500 4.500 0 0 0 6-5.500L13.500 7.500 11 7l-.5-2.500z" fill="#5b80cc" stroke="none" />],
  ['Particles', <><g fill="#4f78c8" stroke="none"><circle cx="4" cy="3.500" r="3.200" /><circle cx="16" cy="3.500" r="1.600" /><circle cx="3.500" cy="15" r="1.600" /><circle cx="15" cy="15" r="2.500" /></g><path d="M8 3.500h6M3.500 7v6M6 6l7 7" stroke="#4f78c8" /></>],
  ['Physics', <><circle cx="9" cy="9" r="3.500" fill="#4f78c8" stroke="none" /><path d="M13 3A7.500 7.500 0 1 0 16.500 9" stroke="#4f78c8" /><circle cx="15.500" cy="3.500" r="1.800" fill="#4f78c8" stroke="none" /></>],
  ['Constraints', <><circle cx="8" cy="10.500" r="6" stroke="#4f78c8" strokeWidth="1.600" /><circle cx="8" cy="10.500" r="2.500" stroke="#4f78c8" strokeWidth="1.400" /><path d="M8 4.500c2-3 8-4 9-1s-2 5-3 6" stroke="#4f78c8" strokeWidth="1.400" /></>],
  ['Data', <><path d="M5 3.500h8M3.500 5.500L8 13M14.500 5.500L10 13" stroke="#12b58a" /><path d="M1.500 2h3.500v3.500H1.500zM13 2h3.500v3.500H13zM7.300 13h3.500v3.500H7.300z" stroke="#12b58a" /></>],
  ['Material', <><circle cx="9" cy="9" r="7.500" fill="#2a1517" stroke="#b04a50" strokeWidth="1.300" /><path d="M9 9V1.500A7.500 7.500 0 0 0 1.500 9zM9 9v7.500A7.500 7.500 0 0 0 16.500 9z" fill="#b04a50" stroke="none" /></>],
];

const grip = (
  <svg viewBox="0 0 11 5" className="ml-auto h-[5px] w-[11px]" fill="#808080" aria-hidden="true">
    {[0, 3, 6, 9].map((x) => <path key={x} d={`M${x} 0h1v1h-1zM${x} 3h1v1h-1z`} />)}
  </svg>
);

function Field({ label, value, fill, first, tight }: { label: string; value: string; fill?: number; first?: boolean; tight?: boolean }) {
  return (
    <label className={`flex items-center ${tight ? 'mt-px' : first ? '' : 'mt-[6px]'}`}>
      <span className="flex-1 pr-[10px] text-right">{label}</span>
      <span className={`relative flex h-[22px] w-[136px] overflow-hidden bg-[#545454] ${tight ? 'rounded-b-[4px]' : label === 'Scale' ? 'rounded-t-[4px]' : 'rounded-[4px]'}`}>
        {fill ? <span className="absolute inset-y-0 left-0 bg-[#4772b3]" style={{ width: `${fill}%` }} /> : null}
        <input defaultValue={value} className="relative w-full bg-transparent text-center outline-none" />
      </span>
      <i className="ml-[11px] mr-[18px] size-[4px] rounded-full bg-[#d8d8d8]" />
    </label>
  );
}

function Properties() {
  return (
    <section aria-label="Properties" className="flex min-h-0 flex-1 flex-col overflow-hidden rounded-[6px] bg-[#303030]">
      <div className="flex h-7 shrink-0 items-center pl-[10px] pr-[9px]">
        <IconMenu label="Editor type: Properties"><Ico><rect x="1" y="2" width="16" height="6" rx="2.500" fill="#e0e0e0" stroke="none" /><rect x="1" y="10" width="16" height="6" rx="2.500" fill="#e0e0e0" stroke="none" /><path d="M8 4h7v2H8zM12 12h3v2h-3z" fill="#282828" stroke="none" /></Ico></IconMenu>
        <Search label="Filter properties" className="ml-[54px] w-[127px]" />
        <button aria-label="Options" className="ml-auto flex h-[22px] w-[22px] items-center justify-center rounded-[4px] border border-[#3d3d3d] bg-[#282828]"><Chevron /></button>
      </div>
      <div className="flex min-h-0 flex-1">
        <div role="tablist" aria-label="Property tabs" className="flex w-8 shrink-0 flex-col bg-[#1d1d1d] pl-[2px] pt-[10px]">
          <button role="tab" aria-selected aria-label="Tool" className="mb-[9px] flex h-[30px] items-center justify-center rounded-l-[5px] bg-[#303030]">
            <Ico><path d="M3.500 1v7" stroke="#e0e0e0" strokeWidth="1.300" /><path d="M1 10c0-2 5-2 5 0v5c0 2.500-5 2.500-5 0z" fill="#e0e0e0" stroke="none" /><path d="M9.500 1v4c0 2 2 2 2 4v8h3V9c0-2 2.500-2 2.500-4V1h-1.500v4h-4V1z" fill="#e0e0e0" stroke="none" /></Ico>
          </button>
          {tabArt.map(([l, art, sep]) => (
            <button key={l} role="tab" aria-selected={false} aria-label={l} className={`flex shrink-0 items-center justify-center ${sep ? 'mb-1 h-9 border-b border-[#161616] pb-1' : 'h-8'}`}>
              {l === 'Scene' || l === 'View Layer' ? art : <Ico>{art}</Ico>}
            </button>
          ))}
        </div>
        <div className="flex min-w-0 flex-1 flex-col gap-[2px] px-[9px] pt-2">
          <div className="flex h-[26px] items-center pl-[7px]">
            <svg viewBox="0 0 26 26" className="size-[26px]" fill="none"><rect x="1" y="1" width="24" height="24" stroke="#f5a623" strokeWidth="1.500" strokeDasharray="4 2" /><path d="M9.500 7.500l9 7-5 .5-4 4.500z" fill="#e8e8e8" /></svg>
            <span className="ml-2">Select Box</span>
          </div>
          <div className="mb-[10px] mt-[6px] flex"><SelectOps /></div>
          {['Options', 'Workspace'].map((t) => (
            <button key={t} className="flex h-[28px] items-center rounded-[5px] bg-[#3d3d3d] pl-3 pr-2">
              <svg viewBox="0 0 6 10" className="mr-[7px] h-[10px] w-[6px]" fill="none" stroke="#aaa" strokeWidth="1.300"><path d="M1 1l4 4-4 4" /></svg>
              {t}{grip}
            </button>
          ))}
          <div className="flex flex-col rounded-[5px] bg-[#3d3d3d] pb-[9px]">
            <button className="mb-[10px] flex h-[28px] items-center pl-[9px] pr-2">
              <svg viewBox="0 0 10 6" className="mr-[6px] h-[6px] w-[10px]" fill="none" stroke="#aaa" strokeWidth="1.300"><path d="M1 1l4 4 4-4" /></svg>
              Object Scatter{grip}
            </button>
            <Field first label="Density" value="10.00" fill={18} />
            <Field label="Radius" value="1 m" fill={18} />
            <Field label="Scale" value="0.30" fill={29} />
            <Field tight label="Randomness" value="80%" fill={80} />
            <label className="mt-[6px] flex h-[22px] items-center">
              <span className="relative ml-[112px] size-[15px]">
                <input type="checkbox" defaultChecked className="block size-[15px] appearance-none rounded-[3px] bg-[#4772b3]" />
                <svg viewBox="0 0 15 15" className="pointer-events-none absolute inset-0" fill="none" stroke="#fff" strokeWidth="2"><path d="M3 7.500L6 11l6-7.500" /></svg>
              </span>
              <span className="ml-1 w-[117px] truncate">Use Normal Rota…</span>
              <i className="ml-auto mr-[18px] size-[4px] rounded-full bg-[#d8d8d8]" />
            </label>
            <Field label="Rotation" value="29°" fill={30} />
            <Field label="Offset" value="0.00" fill={49} />
            <Field label="Seed" value="0" />
          </div>
        </div>
      </div>
    </section>
  );
}

/* ---------- page ---------- */

export default function App() {
  return (
    <div className="relative flex h-screen flex-col overflow-hidden bg-[#161616] font-['Noto_Sans',sans-serif] text-[12px] leading-4 text-[#e0e0e0]">
      <TopBar />
      <main className="flex min-h-0 flex-1 gap-[3px] px-px pb-px pt-[2px]">
        <div className="flex min-w-0 flex-1 flex-col gap-[3px]">
          <div className="flex min-h-0 flex-1 gap-[3px]">
            <div className="flex w-[437px] shrink-0 flex-col gap-[3px]">
              <UvEditor />
              <ShaderEditor />
            </div>
            <Viewport />
          </div>
          <Timeline />
        </div>
        <div className="flex w-[330px] shrink-0 flex-col gap-[3px]">
          <Outliner />
          <Properties />
        </div>
      </main>
      <footer className="h-[23px] shrink-0 overflow-hidden whitespace-nowrap bg-[#1d1d1d] pl-[10px] leading-[23px] text-[#8d8d8d]">
        ↵/PadEnter/LMB: Confirm, Esc/RMB: Cancel, M: Width Type (Offset), A: Width (0.178 m), S: Segments (1), P: Profile (0.500), C: Clamp Overlap (OFF), V: Affect (Edges), O: Outer Miter (Sharp), I: Inner Miter (Sharp), H: Harden Normals (OFF), U: Mark Seam (OFF), K: Mark Sharp (OFF), Z: Profile Type (Superellipse), N: Intersection (Grid Fill)
      </footer>
      <svg viewBox="0 0 94 134" className="pointer-events-none absolute bottom-[25px] left-[482px] h-[134px] w-[94px]" aria-hidden="true">
        <path d="M91 4L9 124" stroke="#c00000" strokeWidth="6" />
        <path d="M1 121l15 8-12 5z" fill="#c00000" />
      </svg>
    </div>
  );
}
